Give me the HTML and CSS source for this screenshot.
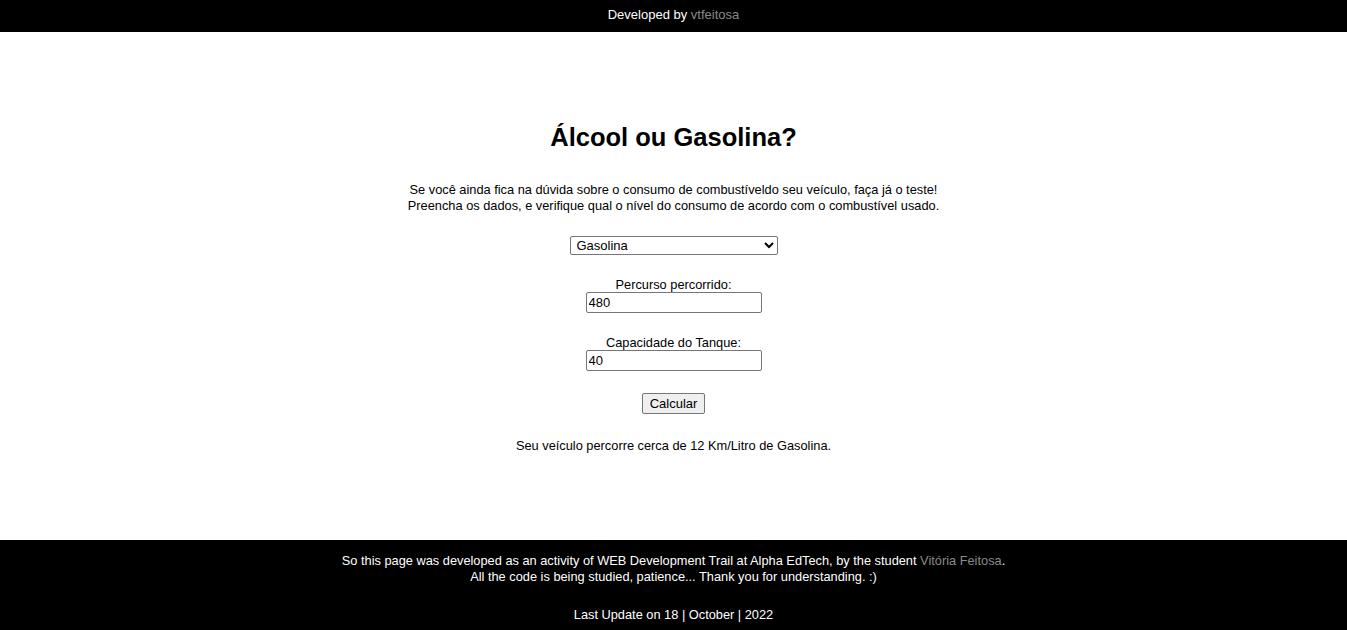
FILE: index.html
```html
<!DOCTYPE html>
<html lang="pt-BR">
<head>
<meta charset="utf-8">
<title>Álcool ou Gasolina?</title>
<link rel="stylesheet" href="styles.css">
</head>
<body>
<header class="topbar">Developed by <a class="muted" href="#">vtfeitosa</a></header>
<main class="content">
  <h1 class="title">Álcool ou Gasolina?</h1>
  <p class="intro">Se você ainda fica na dúvida sobre o consumo de combustíveldo seu veículo, faça já o teste!<br>Preencha os dados, e verifique qual o nível do consumo de acordo com o combustível usado.</p>
  <select class="fuel">
    <option>Gasolina</option>
    <option>Álcool</option>
  </select>
  <label class="field">Percurso percorrido:<input class="num" type="text" value="480"></label>
  <label class="field">Capacidade do Tanque:<input class="num" type="text" value="40"></label>
  <button class="calc">Calcular</button>
  <p class="result">Seu veículo percorre cerca de 12 Km/Litro de Gasolina.</p>
</main>
<footer class="footer">
  <p class="foot-text">So this page was developed as an activity of WEB Development Trail at Alpha EdTech, by the student <a class="muted" href="#">Vitória Feitosa</a>.<br>All the code is being studied, patience... Thank you for understanding. :)</p>
  <p class="foot-date">Last Update on 18 | October | 2022</p>
</footer>
</body>
</html>
```

FILE: styles.css
```css
html, body {
  margin: 0;
  padding: 0;
}
body {
  font-family: "Liberation Sans", Arial, sans-serif;
  font-size: 12.8px;
  color: #000;
  background: #fff;
}
.muted {
  color: #8a8a8a;
  text-decoration: none;
}
.topbar {
  background: #000;
  color: #fff;
  height: 32px;
  line-height: 30px;
  text-align: center;
  font-size: 13px;
}
.content {
  display: flex;
  flex-direction: column;
  align-items: center;
  text-align: center;
  height: 508px;
  box-sizing: border-box;
  padding-top: 90px;
}
.title {
  font-size: 25.5px;
  font-weight: bold;
  margin: 0 0 30px;
  line-height: 30px;
}
.intro {
  margin: 0 0 22px;
  line-height: 16px;
}
.fuel {
  width: 208px;
  height: 19px;
  font-family: inherit;
  font-size: 13px;
  padding: 0 2px;
  border: 1px solid #767676;
  border-radius: 2px;
  background: #fff;
  margin-bottom: 22px;
}
.field {
  display: flex;
  flex-direction: column;
  align-items: center;
  line-height: 15px;
  margin-bottom: 22px;
}
.num {
  width: 176px;
  height: 21px;
  box-sizing: border-box;
  font-family: inherit;
  font-size: 13px;
  padding: 1px 2px;
  border: 1px solid #767676;
  border-radius: 2px;
}
.calc {
  font-family: inherit;
  font-size: 13px;
  height: 21px;
  padding: 1px 7px;
  border: 1px solid #767676;
  border-radius: 2px;
  background: #efefef;
  margin: 0 0 24px;
}
.result {
  margin: 0;
}
.footer {
  background: #000;
  color: #fff;
  height: 90px;
  text-align: center;
  box-sizing: border-box;
  padding-top: 13px;
}
.foot-text {
  margin: 0;
  line-height: 16px;
}
.foot-date {
  margin: 22px 0 0;
}
```
